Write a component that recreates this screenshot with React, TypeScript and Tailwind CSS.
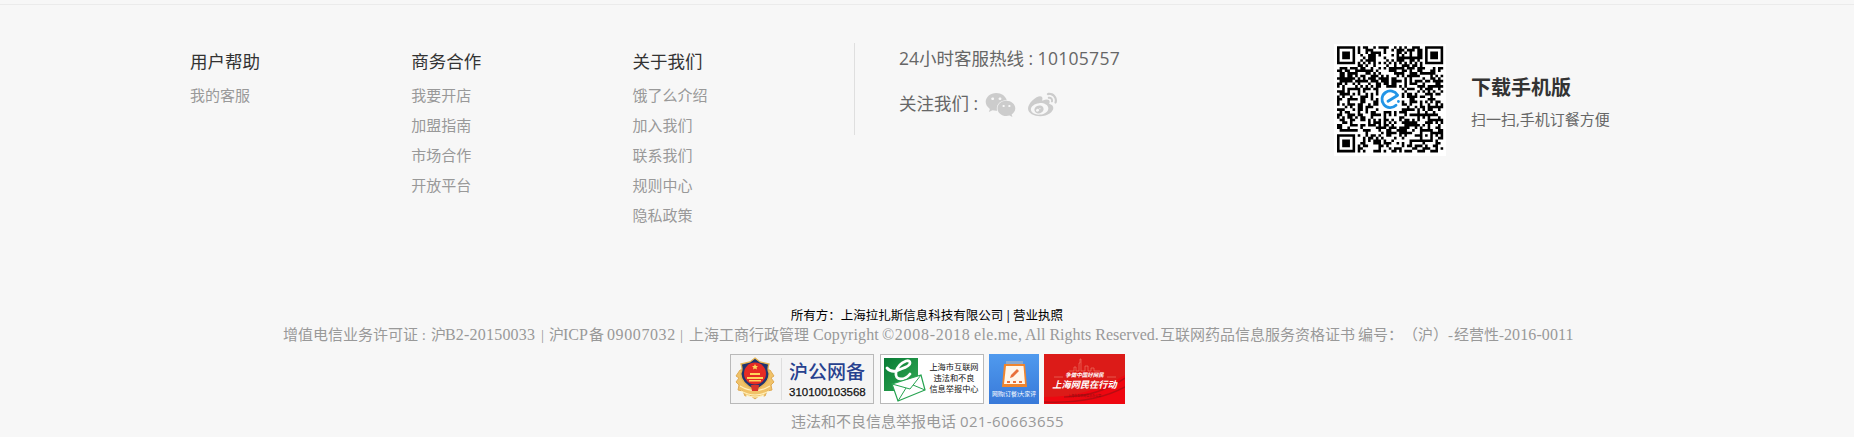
import { FaWeixin, FaWeibo } from 'react-icons/fa';

const columns = [
  { title: '用户帮助', links: ['我的客服'] },
  { title: '商务合作', links: ['我要开店', '加盟指南', '市场合作', '开放平台'] },
  { title: '关于我们', links: ['饿了么介绍', '加入我们', '联系我们', '规则中心', '隐私政策'] },
];

const SIZE = 41;

function finder(x: number, y: number): boolean | null {
  const corners = [[0, 0], [SIZE - 7, 0], [0, SIZE - 7]];
  for (const [cx, cy] of corners) {
    const dx = Math.abs(x - cx - 3);
    const dy = Math.abs(y - cy - 3);
    const d = Math.max(dx, dy);
    if (d <= 4) return d !== 4 && d !== 2;
  }
  const a = Math.max(Math.abs(x - 34), Math.abs(y - 34));
  if (a <= 2) return a !== 1;
  if (x === 6 || y === 6) return (x + y) % 2 === 0;
  return null;
}

function modules() {
  let path = '';
  let seed = 90217;
  for (let y = 0; y < SIZE; y++) {
    for (let x = 0; x < SIZE; x++) {
      seed = (seed * 48271) % 2147483647;
      const fixed = finder(x, y);
      const center = Math.abs(x - 20) < 5 && Math.abs(y - 20) < 5;
      const on = fixed === null ? (seed >> 8) % 100 < 51 : fixed;
      if (on && !center) path += `M${x} ${y}h1v1h-1z`;
    }
  }
  return path;
}

function QrCode() {
  return (
    <svg viewBox="0 0 112 112" className="mt-px h-[112px] w-[112px] bg-white">
      <path d={modules()} fill="#000" transform="translate(3 2.2) scale(2.59)" />
      <g fill="none" stroke="#2395e6" strokeWidth="2.8" strokeLinecap="round">
        <path d="M63.4 51A8.300 8.300 0 1 0 62 61.300" />
        <path d="M54 57.300L63.400 51.500" />
      </g>
      <circle cx="64.400" cy="57.500" r="1.400" fill="#2395e6" />
    </svg>
  );
}

function PoliceBadge() {
  return (
    <div className="flex h-[50px] w-[144px] border border-[#b9b9b9] bg-[#f4f4f4]">
      <svg viewBox="0 0 48 48" className="h-12 w-12 shrink-0">
        <path d="M9 15L5 21l3 2-3 4 3 3-1 5 5 1 2 5 5-1 5 4 5-4 5 1 2-5 5-1-1-5 3-3-3-4 3-2-4-6z" fill="#f0c268" stroke="#e0ab55" strokeWidth="1" />
        <path d="M10 36q14 8 28 0M9 31q15 9 30 0M15 40q9 4 18 0" fill="none" stroke="#fff1bc" strokeWidth="1.2" />
        <path d="M24 3l5 4 9 2q-2 5 0 9 1 10-14 17Q9 28 10 18q2-4 0-9l9-2z" fill="#20346f" stroke="#e6b653" strokeWidth="1.3" />
        <circle cx="24" cy="18.500" r="11" fill="#e62b24" />
        <path d="M24 9l1 2h2l-1.500 1.500.5 2-2-1-2 1 .5-2L21 11h2zM19 18h10v2H19zM16 22h16v2H16zM18 25h12v1.500H18z" fill="#ffd45a" />
        <path d="M20 30h8l-1 6h-6z" fill="#d7342a" />
      </svg>
      <div className="my-[3px] ml-0.5 w-px bg-[#dedede]" />
      <div className="flex flex-col pl-[7px]">
        <div className="h-[29px] whitespace-nowrap pt-[3px] text-[19px] font-medium leading-[29px] text-[#27418f]">沪公网备</div>
        <div className="whitespace-nowrap pt-px font-['Liberation_Sans','Noto_Sans_CJK_SC',sans-serif] text-[11.5px] leading-[14px] text-[#111] [-webkit-text-stroke:0.25px_#111]">310100103568</div>
      </div>
    </div>
  );
}

function ReportBadge() {
  return (
    <div className="flex h-[50px] w-[104px] border border-[#b9b9b9] bg-white">
      <svg viewBox="0 0 46 48" className="h-12 w-[46px] shrink-0">
        <defs>
          <linearGradient id="leaf" x1="0" y1="0" x2="1" y2="1">
            <stop offset="0" stopColor="#087b35" />
            <stop offset="1" stopColor="#33aa55" />
          </linearGradient>
        </defs>
        <path d="M3 3h34v33H3z" fill="url(#leaf)" />
        <path d="M6 13q5 6 14 1 9-3 9-6 0-3-4-2-8 3-10 11-1 7 5 7 5 0 9-5" fill="none" stroke="#fff" strokeWidth="2.8" strokeLinecap="round" />
        <path d="M11 29l29-9 4 15-27 11z" fill="#fff" stroke="#26a350" strokeWidth="1.2" />
        <path d="M11 29l18 5 11-14M17 46l8-13M44 35l-12-5" fill="none" stroke="#26a350" strokeWidth="1" />
      </svg>
      <div className="w-[54px] whitespace-nowrap pt-[6px] text-center text-[8.2px] leading-[11px] text-[#111]">
        <div>上海市互联网</div>
        <div>违法和不良</div>
        <div>信息举报中心</div>
      </div>
    </div>
  );
}

function ReviewBadge() {
  return (
    <div className="flex h-[50px] w-[50px] flex-col items-center overflow-hidden bg-linear-to-b from-[#509aee] to-[#3879d9]">
      <svg viewBox="0 0 50 36" className="h-9 w-[50px] shrink-0">
        <path d="M17 7h17v4H17z" fill="#8aa9cf" />
        <path d="M15 10h21l2 23H13z" fill="#ef852e" />
        <path d="M17 12h17.500l1.500 18H15z" fill="#fff6ea" />
        <path d="M21 24l1-3 6-6 2 2-6 6z" fill="#e8703a" />
        <path d="M18 27h3v2h-3zm6 0h3v2h-3zm6 0h3v2h-3z" fill="#e8703a" />
      </svg>
      <div className="whitespace-nowrap text-[5.8px] leading-[8px] text-white">网购(订餐)大家评</div>
    </div>
  );
}

function ActionBadge() {
  return (
    <div className="grid h-[50px] w-[81px] overflow-hidden bg-[#dc1b18]">
      <svg viewBox="0 0 81 50" className="col-start-1 row-start-1 h-[50px] w-[81px]">
        <path d="M0 43Q45 43 81 21v29H0z" fill="#ee0710" />
        <path d="M0 48Q50 50 81 33M20 43Q55 42 81 24" stroke="#b90c12" strokeWidth="1.500" fill="none" />
        <path d="M25 17h5v-4h2v4h3V9h1V5h1v12h4v-5h3v5h3v-3h3v3h6M10 23h9m44 0h9" stroke="#f08070" strokeWidth=".6" fill="none" />
      </svg>
      <div className="col-start-1 row-start-1 whitespace-nowrap pt-[17px] text-center italic text-white">
        <div className="text-[5.5px] font-bold leading-[8px]">争做中国好网民</div>
        <div className="text-[9.200px] font-bold leading-[11px]">上海网民在行动</div>
        <div className="pt-1 text-[3px] not-italic leading-[5px] text-[#8d1010]">上海市互联网信息办公室</div>
      </div>
    </div>
  );
}

export default function App() {
  return (
    <footer className="flex h-[437px] w-[1854px] flex-col overflow-hidden bg-[#f7f7f7] pt-1 font-['Open_Sans','Noto_Sans_CJK_SC',sans-serif]">
      <div className="h-px w-full shrink-0 bg-[#ebebeb]" />
      <div className="flex h-[300px] shrink-0 pl-[190px] pt-[38px]">
        {columns.map((column) => (
          <nav key={column.title} className="w-[221.3px] pt-1">
            <h3 className="h-[33px] text-[17.5px] leading-[28px] text-[#333]">{column.title}</h3>
            <ul>
              {column.links.map((link) => (
                <li key={link} className="h-[30px] text-[15px] leading-[30px] text-[#999]">{link}</li>
              ))}
            </ul>
          </nav>
        ))}
        <div className="flex h-[93px] w-[480px] flex-col text-[17.5px] text-[#666]">
          <div className="h-[92px] border-l border-[#dfdfdf] pl-[44px]">
            <div className="h-[45px] leading-[31px]">
              24小时客服热线 : <span className="tracking-[0.3px]">10105757</span>
            </div>
            <div className="flex h-[30px] items-center">
              <span className="w-[86px] whitespace-nowrap leading-[30px]">关注我们 :</span>
              <FaWeixin className="mt-[3px] h-[28px] w-[31px] text-[#ccc]" />
              <FaWeibo className="ml-[12px] mt-[4px] h-[29px] w-[29px] text-[#ccc]" />
            </div>
          </div>
        </div>
        <QrCode />
        <div className="pl-[25px] pt-[29px]">
          <div className="text-[20px] font-bold leading-[32px] text-[#333]">下载手机版</div>
          <div className="text-[15px] leading-[31px] text-[#666]">扫一扫,手机订餐方便</div>
        </div>
      </div>
      <div className="flex h-[21px] shrink-0 items-center justify-center text-[12.5px] leading-[21px] text-black [word-spacing:-1.8px]">
        所有方：上海拉扎斯信息科技有限公司 | 营业执照
      </div>
      <div className="flex h-[18px] shrink-0 whitespace-nowrap pl-[283px] font-['Liberation_Serif','Noto_Sans_CJK_SC',serif] text-[15px] leading-[18px] text-[#999]">
        <span className="w-[148px]">增值电信业务许可证 :</span>
        <span className="w-[14px]">沪</span>
        <span className="w-[96px] text-[16px] tracking-[0.2px]">B2-20150033</span>
        <span className="w-[8px]">|</span>
        <span className="w-[14px]">沪</span>
        <span className="w-[26px] text-[16px]">ICP</span>
        <span className="w-[18px]">备</span>
        <span className="w-[73px] text-[16px] tracking-[0.6px]">09007032</span>
        <span className="w-[9px]">|</span>
        <span className="w-[124px]">上海工商行政管理</span>
        <span className="w-[69px] text-[16px] tracking-[0.1px]">Copyright</span>
        <span className="w-[92px] text-[16px] tracking-[0.7px]">©2008-2018</span>
        <span className="w-[51px] text-[16px] tracking-[0.3px]">ele.me,</span>
        <span className="w-[135px] text-[16px]">All Rights Reserved.</span>
        <span className="w-[198px]">互联网药品信息服务资格证书</span>
        <span className="w-[45px]">编号：</span>
        <span className="w-[45px] [text-spacing-trim:space-all]">（沪）</span>
        <span className="w-[6px]">-</span>
        <span className="w-[50px]">经营性-</span>
        <span className="text-[16px] tracking-[0.1px]">2016-0011</span>
      </div>
      <div className="flex h-[61px] shrink-0 gap-[6px] pl-[730px] pt-[10px]">
        <PoliceBadge />
        <ReportBadge />
        <div className="-ml-px flex gap-[5px]">
          <ReviewBadge />
          <ActionBadge />
        </div>
      </div>
      <div className="pl-[791px] text-[15px] leading-[33px] text-[#999]">
        违法和不良信息举报电话 <span className="tracking-[0.4px]">021-60663655</span>
      </div>
    </footer>
  );
}
